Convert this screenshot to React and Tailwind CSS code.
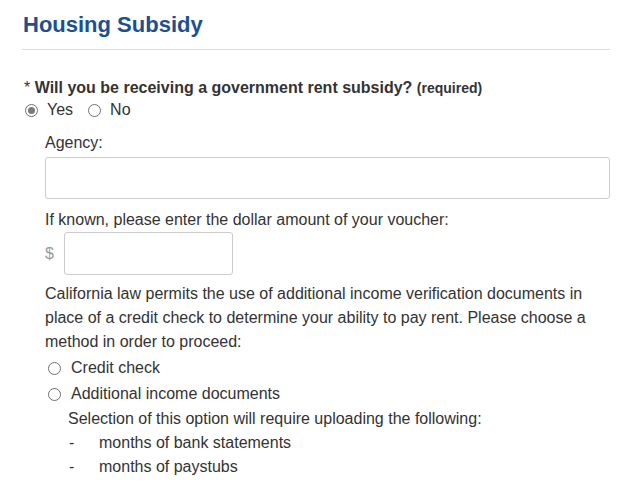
const Radio = ({ checked }) => (
  <span className="flex h-[13px] w-[13px] shrink-0 items-center justify-center rounded-full border border-[#6f6f6f] bg-white">
    {checked && <span className="h-[7px] w-[7px] rounded-full bg-[#7a7a7a]" />}
  </span>
);

const App = () => {
  return (
    <div className="min-h-[494px] bg-white pl-[22px] pr-[28px] font-['Liberation_Sans',Arial,sans-serif] text-[16px] leading-[24px] text-[#333]">
      <h2 className="border-b border-[#dddddd] pb-[10px] pl-px pt-[10px] text-[22px] font-bold leading-[29px] text-[#1d4f91]">
        Housing Subsidy
      </h2>

      <div className="mt-[28px] pl-[2px] text-[16px] font-bold leading-[20px]">
        <span className="font-normal">* </span>Will you be receiving a government rent subsidy?{' '}
        <span className="text-[14px]">(required)</span>
      </div>

      <div className="flex h-[24px] items-center pl-[3px]">
        <Radio checked />
        <span className="ml-[9px]">Yes</span>
        <span className="ml-[15px]">
          <Radio />
        </span>
        <span className="ml-[9px]">No</span>
      </div>

      <div className="pl-[23px]">
        <div className="mt-[9px]">Agency:</div>
        <div className="mt-[2px] h-[42px] rounded-[3px] border border-[#cccccc] bg-white" />

        <div className="mt-[9px]">If known, please enter the dollar amount of your voucher:</div>
        <div className="flex items-center">
          <span className="w-[19px] text-[#999]">$</span>
          <div className="h-[43px] w-[169px] rounded-[3px] border border-[#cccccc] bg-white" />
        </div>

        <p className="mt-[7px]">
          California law permits the use of additional income verification documents in place of a credit
          check to determine your ability to pay rent. Please choose a method in order to proceed:
        </p>

        <div className="mt-px flex h-[26px] items-center pl-[3px]">
          <Radio />
          <span className="ml-[10px]">Credit check</span>
        </div>
        <div className="flex h-[26px] items-center pl-[3px]">
          <Radio />
          <span className="ml-[10px]">Additional income documents</span>
        </div>

        <div className="pl-[23px]">
          <div>Selection of this option will require uploading the following:</div>
          <div className="flex">
            <span className="w-[31px] pl-px">-</span>
            <span>months of bank statements</span>
          </div>
          <div className="flex">
            <span className="w-[31px] pl-px">-</span>
            <span>months of paystubs</span>
          </div>
        </div>
      </div>
    </div>
  );
};

export default App;
